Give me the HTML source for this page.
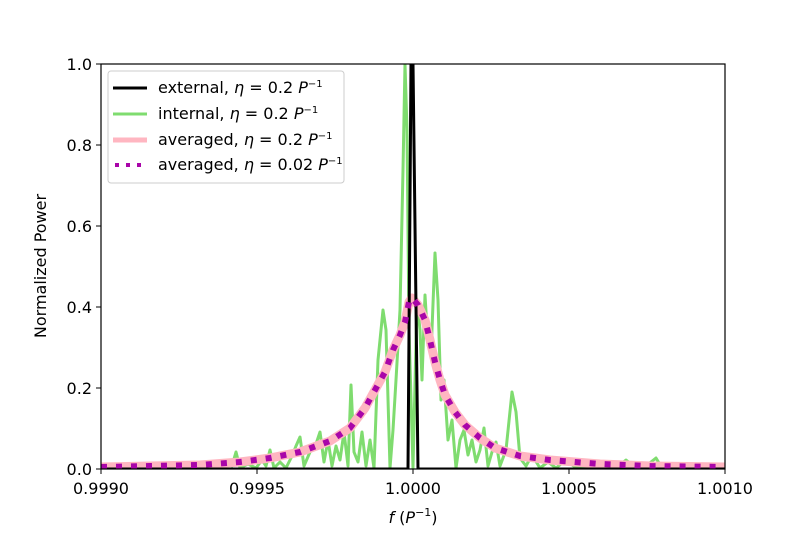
<!DOCTYPE html>
<html><head><style>
body{margin:0;background:#fff;width:806px;height:537px;overflow:hidden}
svg text{font-family:"DejaVu Sans","Liberation Sans",sans-serif;font-size:16px;fill:#000}
</style></head><body>
<svg width="806" height="537" viewBox="0 0 806 537" xmlns="http://www.w3.org/2000/svg">
<defs><clipPath id="c"><rect x="101" y="64" width="624" height="405"/></clipPath></defs>
<g clip-path="url(#c)" fill="none" stroke-linejoin="round">
<polyline stroke="#7fdc6f" stroke-width="3" points="101,466 110,468 118,465 126,468 135,466 145,468 155,466 165,468 175,465 185,468 195,466 205,463 215,468 225,462 232,466 236,452 240,468 248,464 256,468 262,460 266,466 270,450 274,468 280,462 286,468 292,456 296,446 300,437 304,466 310,452 316,444 320,432 324,462 328,440 332,466 336,446 340,460 344,432 348,466 351,385 354,452 358,462 362,432 366,466 370,440 374,468 378,360 383,310 386,330 390,468 393,430 396,380 400,310 403,170 405,64 407,130 409,330 413,468 417,300 420,330 422,380 425,295 428,345 431,355 435,253 438,300 441,400 444,380 448,440 452,420 456,468 460,440 464,430 468,455 472,440 476,462 480,450 484,428 488,466 492,452 496,442 500,466 506,450 512,392 516,412 520,458 526,466 532,455 540,468 548,462 556,468 566,460 576,468 586,466 596,468 606,462 616,468 626,460 636,468 646,466 656,458 662,468 672,466 682,468 694,465 705,468 715,466 725,468"/>
<polyline stroke="#ffb6c1" stroke-width="9" points="101,467 150,466 200,465 240,462 270,458 300,452 330,441 350,428 365,408 375,390 385,372 393,350 400,335 405,322 409,302 412,298 418,305 425,320 430,340 435,362 440,380 445,395 455,412 465,425 480,438 495,448 520,456 550,460 600,464 650,466 725,467"/>
<polyline stroke="#000" stroke-width="3" points="101,469 408,469 411,64 413,64 418,469 725,469"/>
<polyline stroke="#a905a9" stroke-width="6" stroke-dasharray="6,9" points="101,467 150,466 200,465 240,462 270,458 300,452 330,441 350,428 365,408 375,390 385,372 393,350 400,335 405,322 409,302 412,298 418,305 425,320 430,340 435,362 440,380 445,395 455,412 465,425 480,438 495,448 520,456 550,460 600,464 650,466 725,467"/>
</g>
<rect x="101" y="64" width="624" height="405" fill="none" stroke="#000" stroke-width="1.2"/>
<g stroke="#000" stroke-width="1">
<line x1="101" y1="469" x2="101" y2="474"/><line x1="257" y1="469" x2="257" y2="474"/><line x1="413" y1="469" x2="413" y2="474"/><line x1="569" y1="469" x2="569" y2="474"/><line x1="725" y1="469" x2="725" y2="474"/>
<line x1="96" y1="469" x2="101" y2="469"/><line x1="96" y1="388" x2="101" y2="388"/><line x1="96" y1="307" x2="101" y2="307"/><line x1="96" y1="226" x2="101" y2="226"/><line x1="96" y1="145" x2="101" y2="145"/><line x1="96" y1="64" x2="101" y2="64"/>
</g>
<g text-anchor="middle">
<text x="101" y="494">0.9990</text><text x="257" y="494">0.9995</text><text x="413" y="494">1.0000</text><text x="569" y="494">1.0005</text><text x="725" y="494">1.0010</text>
<text x="413" y="523"><tspan font-style="italic">f</tspan> (<tspan font-style="italic">P</tspan><tspan font-size="11" dy="-7">−1</tspan><tspan dy="7">)</tspan></text>
</g>
<g text-anchor="end">
<text x="92" y="475">0.0</text><text x="92" y="394">0.2</text><text x="92" y="313">0.4</text><text x="92" y="232">0.6</text><text x="92" y="151">0.8</text><text x="92" y="70">1.0</text>
</g>
<text transform="translate(46,266) rotate(-90)" text-anchor="middle">Normalized Power</text>
<rect x="108" y="71" width="236" height="112" rx="3" fill="#fff" fill-opacity="0.85" stroke="#ccc"/>
<g stroke-width="3">
<line x1="113" y1="88" x2="147" y2="88" stroke="#000"/>
<line x1="113" y1="114" x2="147" y2="114" stroke="#7fdc6f"/>
<line x1="113" y1="140" x2="147" y2="140" stroke="#ffb6c1" stroke-width="5"/>
<line x1="115" y1="165" x2="147" y2="165" stroke="#a905a9" stroke-width="4" stroke-dasharray="4,7"/>
</g>
<g>
<text x="158" y="93" font-size="14">external, <tspan font-style="italic">η</tspan> = 0.2 <tspan font-style="italic">P</tspan><tspan font-size="10" dy="-6">−1</tspan></text>
<text x="158" y="119" font-size="14">internal, <tspan font-style="italic">η</tspan> = 0.2 <tspan font-style="italic">P</tspan><tspan font-size="10" dy="-6">−1</tspan></text>
<text x="158" y="145" font-size="14">averaged, <tspan font-style="italic">η</tspan> = 0.2 <tspan font-style="italic">P</tspan><tspan font-size="10" dy="-6">−1</tspan></text>
<text x="158" y="170" font-size="14">averaged, <tspan font-style="italic">η</tspan> = 0.02 <tspan font-style="italic">P</tspan><tspan font-size="10" dy="-6">−1</tspan></text>
</g>
</svg>
</body></html>
